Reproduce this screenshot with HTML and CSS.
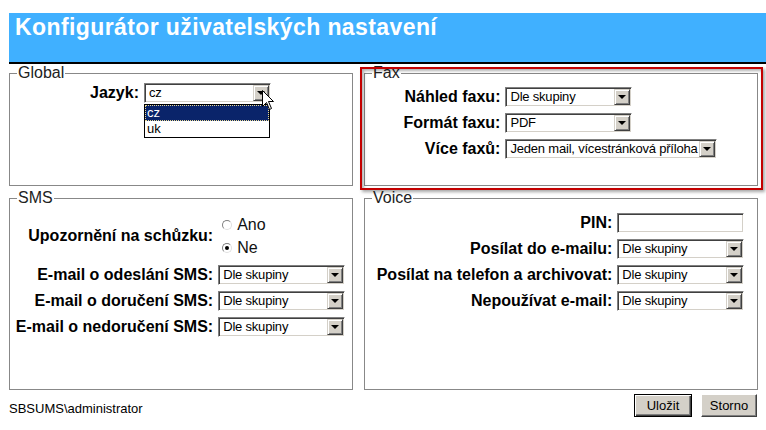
FILE: index.html
```html
<!DOCTYPE html>
<html lang="cs">
<head>
  <meta charset="UTF-8" />
  <title>Konfigurátor uživatelských nastavení</title>
  <link rel="stylesheet" href="styles.css">
</head>
<body>
  <header class="title-bar">
    <h1>Konfigurátor uživatelských nastavení</h1>
  </header>

  <main class="panels">
    <fieldset class="panel panel-global">
      <legend>Global</legend>
      <div class="form-grid">
        <label class="field-label">Jazyk:</label>
        <div class="combo-wrap">
          <span class="combo"><span class="combo-value">cz</span><span class="combo-arrow"></span></span>
          <ul class="combo-list">
            <li class="selected">cz</li>
            <li>uk</li>
          </ul>
          <svg class="cursor" width="13" height="21" viewBox="0 0 13 21">
            <path d="M0.5 0.5 L0.5 16.5 L4.5 12.5 L7.5 19.5 L9.5 18.5 L6.5 11.5 L11.5 11.5 Z" fill="#fff" stroke="#000" stroke-width="1"/>
          </svg>
        </div>
      </div>
    </fieldset>

    <div class="highlight">
      <fieldset class="panel panel-fax">
        <legend>Fax</legend>
        <div class="form-grid">
          <label class="field-label">Náhled faxu:</label>
          <span class="combo"><span class="combo-value">Dle skupiny</span><span class="combo-arrow"></span></span>
          <label class="field-label">Formát faxu:</label>
          <span class="combo"><span class="combo-value">PDF</span><span class="combo-arrow"></span></span>
          <label class="field-label">Více faxů:</label>
          <span class="combo combo-wide"><span class="combo-value">Jeden mail, vícestránková příloha</span><span class="combo-arrow"></span></span>
        </div>
      </fieldset>
    </div>

    <fieldset class="panel panel-sms">
      <legend>SMS</legend>
      <div class="form-grid">
        <label class="field-label">Upozornění na schůzku:</label>
        <div class="radio-group">
          <label class="radio"><span class="radio-dot"></span>Ano</label>
          <label class="radio"><span class="radio-dot checked"></span>Ne</label>
        </div>
        <label class="field-label">E-mail o odeslání SMS:</label>
        <span class="combo"><span class="combo-value">Dle skupiny</span><span class="combo-arrow"></span></span>
        <label class="field-label">E-mail o doručení SMS:</label>
        <span class="combo"><span class="combo-value">Dle skupiny</span><span class="combo-arrow"></span></span>
        <label class="field-label">E-mail o nedoručení SMS:</label>
        <span class="combo"><span class="combo-value">Dle skupiny</span><span class="combo-arrow"></span></span>
      </div>
    </fieldset>

    <fieldset class="panel panel-voice">
      <legend>Voice</legend>
      <div class="form-grid">
        <label class="field-label">PIN:</label>
        <span class="text-box"></span>
        <label class="field-label">Posílat do e-mailu:</label>
        <span class="combo"><span class="combo-value">Dle skupiny</span><span class="combo-arrow"></span></span>
        <label class="field-label">Posílat na telefon a archivovat:</label>
        <span class="combo"><span class="combo-value">Dle skupiny</span><span class="combo-arrow"></span></span>
        <label class="field-label">Nepoužívat e-mail:</label>
        <span class="combo"><span class="combo-value">Dle skupiny</span><span class="combo-arrow"></span></span>
      </div>
    </fieldset>
  </main>

  <footer class="footer">
    <span class="user">SBSUMS\administrator</span>
    <div class="buttons">
      <button class="btn btn-default">Uložit</button>
      <button class="btn">Storno</button>
    </div>
  </footer>
</body>
</html>
```

FILE: styles.css
```css
body {
  margin: 0;
  font-family: "Liberation Sans", Arial, sans-serif;
  background: #fff;
  color: #000;
}

.title-bar {
  margin: 13px 0 0 9px;
  height: 49px;
  background-color: #40b0ff;
  border-bottom: 2px solid #000;
}

.title-bar h1 {
  margin: 0;
  padding: 1px 0 0 6px;
  font-size: 23px;
  line-height: 26px;
  letter-spacing: 0.4px;
  font-weight: bold;
  color: #fff;
}

.panels {
  display: grid;
  grid-template-columns: 344px 394px;
  grid-template-rows: 122px 201px;
  column-gap: 11px;
  row-gap: 3px;
  margin: 0 8px 0 9px;
}

.panel {
  margin: 0;
  padding: 0 8px 0 7px;
  min-width: 0;
  height: 100%;
  box-sizing: border-box;
  border: 1px solid #888;
}

.panel legend {
  padding: 0 1px;
  font-size: 16px;
  line-height: 18px;
  color: #222;
}

.panel-global { padding-top: 1px; }
.panel-fax { padding-top: 5px; }
.panel-sms { padding-top: 6px; }
.panel-voice { padding-top: 6px; }

.form-grid {
  display: grid;
  grid-template-columns: auto auto;
  justify-content: center;
  align-items: center;
  column-gap: 5px;
  row-gap: 6px;
}

.field-label {
  justify-self: end;
  font-size: 16px;
  font-weight: bold;
  white-space: nowrap;
}

/* fake windows classic combobox */
.combo,
.text-box {
  display: inline-flex;
  box-sizing: border-box;
  width: 127px;
  height: 20px;
  background: #fff;
  border: 1px solid;
  border-color: #808080 #fff #fff #808080;
  box-shadow: inset 1px 1px 0 #404040, inset -1px -1px 0 #d4d0c8;
  padding: 1px;
}

.combo-wide {
  width: 212px;
}

.combo-value {
  flex: 1;
  padding-left: 3px;
  font-size: 13px;
  line-height: 16px;
  letter-spacing: -0.2px;
  white-space: nowrap;
  overflow: hidden;
}

.combo-arrow {
  position: relative;
  flex: none;
  width: 16px;
  height: 16px;
  box-sizing: border-box;
  background: #d4d0c8;
  border: 1px solid;
  border-color: #d4d0c8 #404040 #404040 #d4d0c8;
  box-shadow: inset 1px 1px 0 #fff, inset -1px -1px 0 #808080;
}

.combo-arrow::before {
  content: "";
  position: absolute;
  left: 3px;
  top: 5px;
  border-left: 4px solid transparent;
  border-right: 4px solid transparent;
  border-top: 4px solid #000;
}

.combo-wrap {
  position: relative;
  display: flex;
}

.combo-list {
  position: absolute;
  left: 0;
  top: 21px;
  width: 126px;
  margin: 0;
  padding: 0;
  list-style: none;
  background: #fff;
  border: 1px solid #000;
  box-sizing: border-box;
  font-size: 13px;
}

.combo-list li {
  height: 16px;
  line-height: 16px;
  padding-left: 2px;
}

.combo-list li.selected {
  background: #0a246a;
  color: #fff;
  outline: 1px dotted #e8d890;
  outline-offset: -1px;
}

.cursor {
  position: absolute;
  left: 118px;
  top: 7px;
}

.highlight {
  position: relative;
}

.highlight::after {
  content: "";
  position: absolute;
  left: -4px;
  right: -5px;
  top: 3px;
  bottom: -4px;
  border: 2px solid #c40000;
  box-shadow: 2px 2px 3px rgba(0, 0, 0, 0.35), inset 2px 2px 3px rgba(0, 0, 0, 0.3);
  pointer-events: none;
}

.panel-fax {
  width: 100%;
}

.radio-group {
  display: flex;
  flex-direction: column;
}

.radio {
  display: flex;
  align-items: center;
  height: 23px;
  font-size: 16px;
  color: #111;
}

.radio-dot {
  position: relative;
  width: 10px;
  height: 10px;
  box-sizing: border-box;
  margin: 0 5px 0 4px;
  border-radius: 50%;
  border: 1px solid;
  border-color: #808080 #e0e0e0 #e0e0e0 #808080;
  background: #fff;
}

.radio-dot.checked::after {
  content: "";
  position: absolute;
  left: 2px;
  top: 2px;
  width: 4px;
  height: 4px;
  border-radius: 50%;
  background: #000;
}

.footer {
  display: flex;
  justify-content: space-between;
  align-items: center;
  margin: 4px 9px 0 9px;
}

.user {
  padding-top: 5px;
  font-size: 13px;
}

.buttons {
  display: flex;
  gap: 9px;
}

.btn {
  box-sizing: border-box;
  width: 56px;
  height: 23px;
  padding: 0;
  font-family: "Liberation Sans", Arial, sans-serif;
  font-size: 13px;
  color: #000;
  background: #d4d0c8;
  border: 1px solid;
  border-color: #fff #404040 #404040 #fff;
  box-shadow: inset -1px -1px 0 #808080;
}

.btn-default {
  width: 58px;
  border: 1px solid #000;
  box-shadow: inset 1px 1px 0 #fff, inset -1px -1px 0 #404040, inset -2px -2px 0 #808080;
}
```
